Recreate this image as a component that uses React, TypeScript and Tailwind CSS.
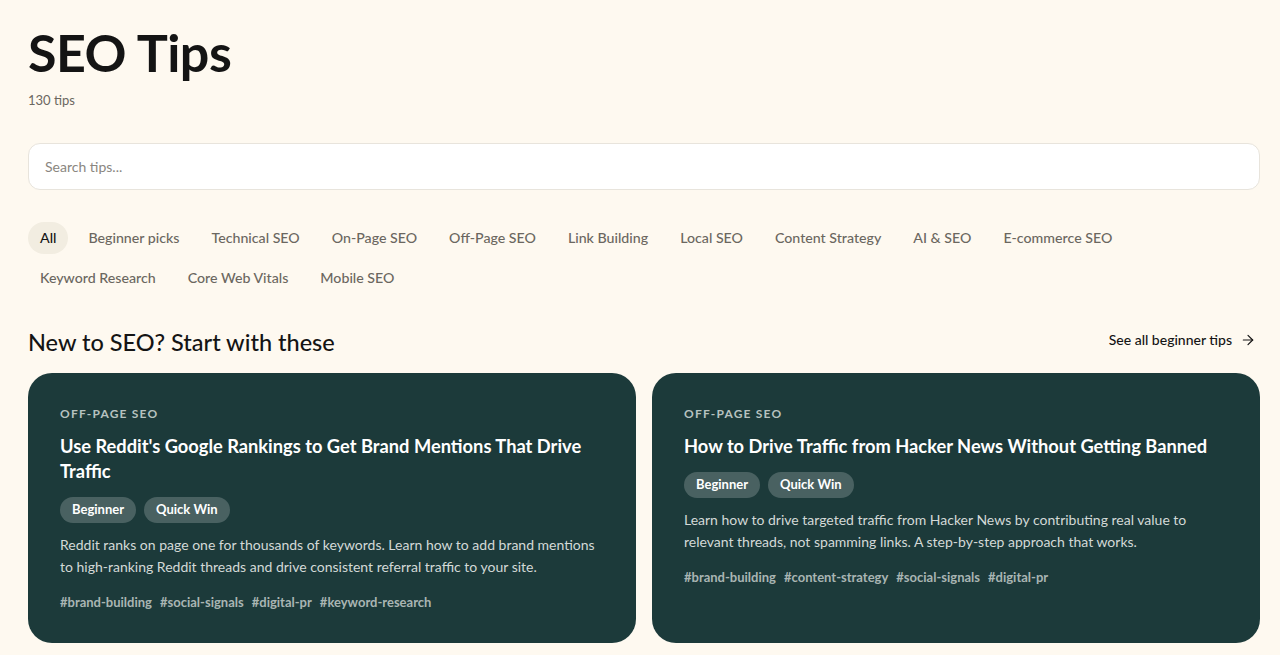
import { ArrowRight } from "lucide-react";

const filters = [
  "All",
  "Beginner picks",
  "Technical SEO",
  "On-Page SEO",
  "Off-Page SEO",
  "Link Building",
  "Local SEO",
  "Content Strategy",
  "AI & SEO",
  "E-commerce SEO",
  "Keyword Research",
  "Core Web Vitals",
  "Mobile SEO",
];

const tips = [
  {
    category: "Off-Page SEO",
    title: "Use Reddit's Google Rankings to Get Brand Mentions That Drive Traffic",
    badges: ["Beginner", "Quick Win"],
    desc: "Reddit ranks on page one for thousands of keywords. Learn how to add brand mentions to high-ranking Reddit threads and drive consistent referral traffic to your site.",
    tags: ["brand-building", "social-signals", "digital-pr", "keyword-research"],
  },
  {
    category: "Off-Page SEO",
    title: "How to Drive Traffic from Hacker News Without Getting Banned",
    badges: ["Beginner", "Quick Win"],
    desc: "Learn how to drive targeted traffic from Hacker News by contributing real value to relevant threads, not spamming links. A step-by-step approach that works.",
    tags: ["brand-building", "content-strategy", "social-signals", "digital-pr"],
  },
];

const App = () => {
  return (
    <div className="h-screen overflow-hidden bg-[#fef9f0] font-['Lato',sans-serif] text-[#141414]">
      <div className="pl-7 pr-5 pt-[22px]">
        {/* Header */}
        <h1 className="text-[52px] leading-[60px] font-bold tracking-[-0.5px]">SEO Tips</h1>
        <p className="mt-[9px] text-[13px] text-[#6b6760]">130 tips</p>

        {/* Search */}
        <input
          className="mt-[32px] w-full h-[47px] rounded-xl border border-[#e8e4dc] bg-white px-4 text-sm outline-none placeholder:text-[#8a8680]"
          placeholder="Search tips..."
        />

        {/* Filters */}
        <div className="mt-[32px] flex flex-wrap gap-x-2 gap-y-2">
          {filters.map((f, i) => (
            <button
              key={f}
              className={`h-8 px-3 rounded-full text-[14.2px] font-medium ${i === 0
                  ? "bg-[#f2ede1] text-[#141414]"
                  : "text-[#6b6760] hover:bg-[#f2ede1]"
                }`}
            >
              {f}
            </button>
          ))}
        </div>

        {/* Beginner section */}
        <div className="mt-[31px] flex items-center justify-between">
          <h2 className="text-[23.5px] font-medium">New to SEO? Start with these</h2>
          <a className="flex items-center gap-2 text-sm font-medium pr-1 -mt-1">
            See all beginner tips <ArrowRight className="w-4 h-4" strokeWidth={1.75} />
          </a>
        </div>

        <div className="mt-[13px] grid grid-cols-2 gap-4">
          {tips.map((t) => (
            <div key={t.title} className="h-[270px] rounded-3xl bg-[#1c3a3a] px-8 pt-[33px]">
              <p className="text-xs font-bold uppercase tracking-[1.2px] text-[#b7c2c0]">{t.category}</p>
              <h3 className="mt-[12px] text-[18.3px] leading-[25px] font-bold text-white">{t.title}</h3>
              <div className="mt-[13px] flex gap-2">
                {t.badges.map((b) => (
                  <span
                    key={b}
                    className="h-[26px] px-3 rounded-full bg-white/20 text-[13px] font-bold text-white flex items-center"
                  >
                    {b}
                  </span>
                ))}
              </div>
              <p className="mt-[11px] text-sm leading-[22px] text-[#d3d9d7]">{t.desc}</p>
              <div className="mt-[15px] flex flex-wrap gap-2 text-[13px] font-bold text-[#a9b5b3]">
                {t.tags.map((g) => (
                  <span key={g}>#{g}</span>
                ))}
              </div>
            </div>
          ))}
        </div>
      </div>
    </div>
  );
};

export default App;
